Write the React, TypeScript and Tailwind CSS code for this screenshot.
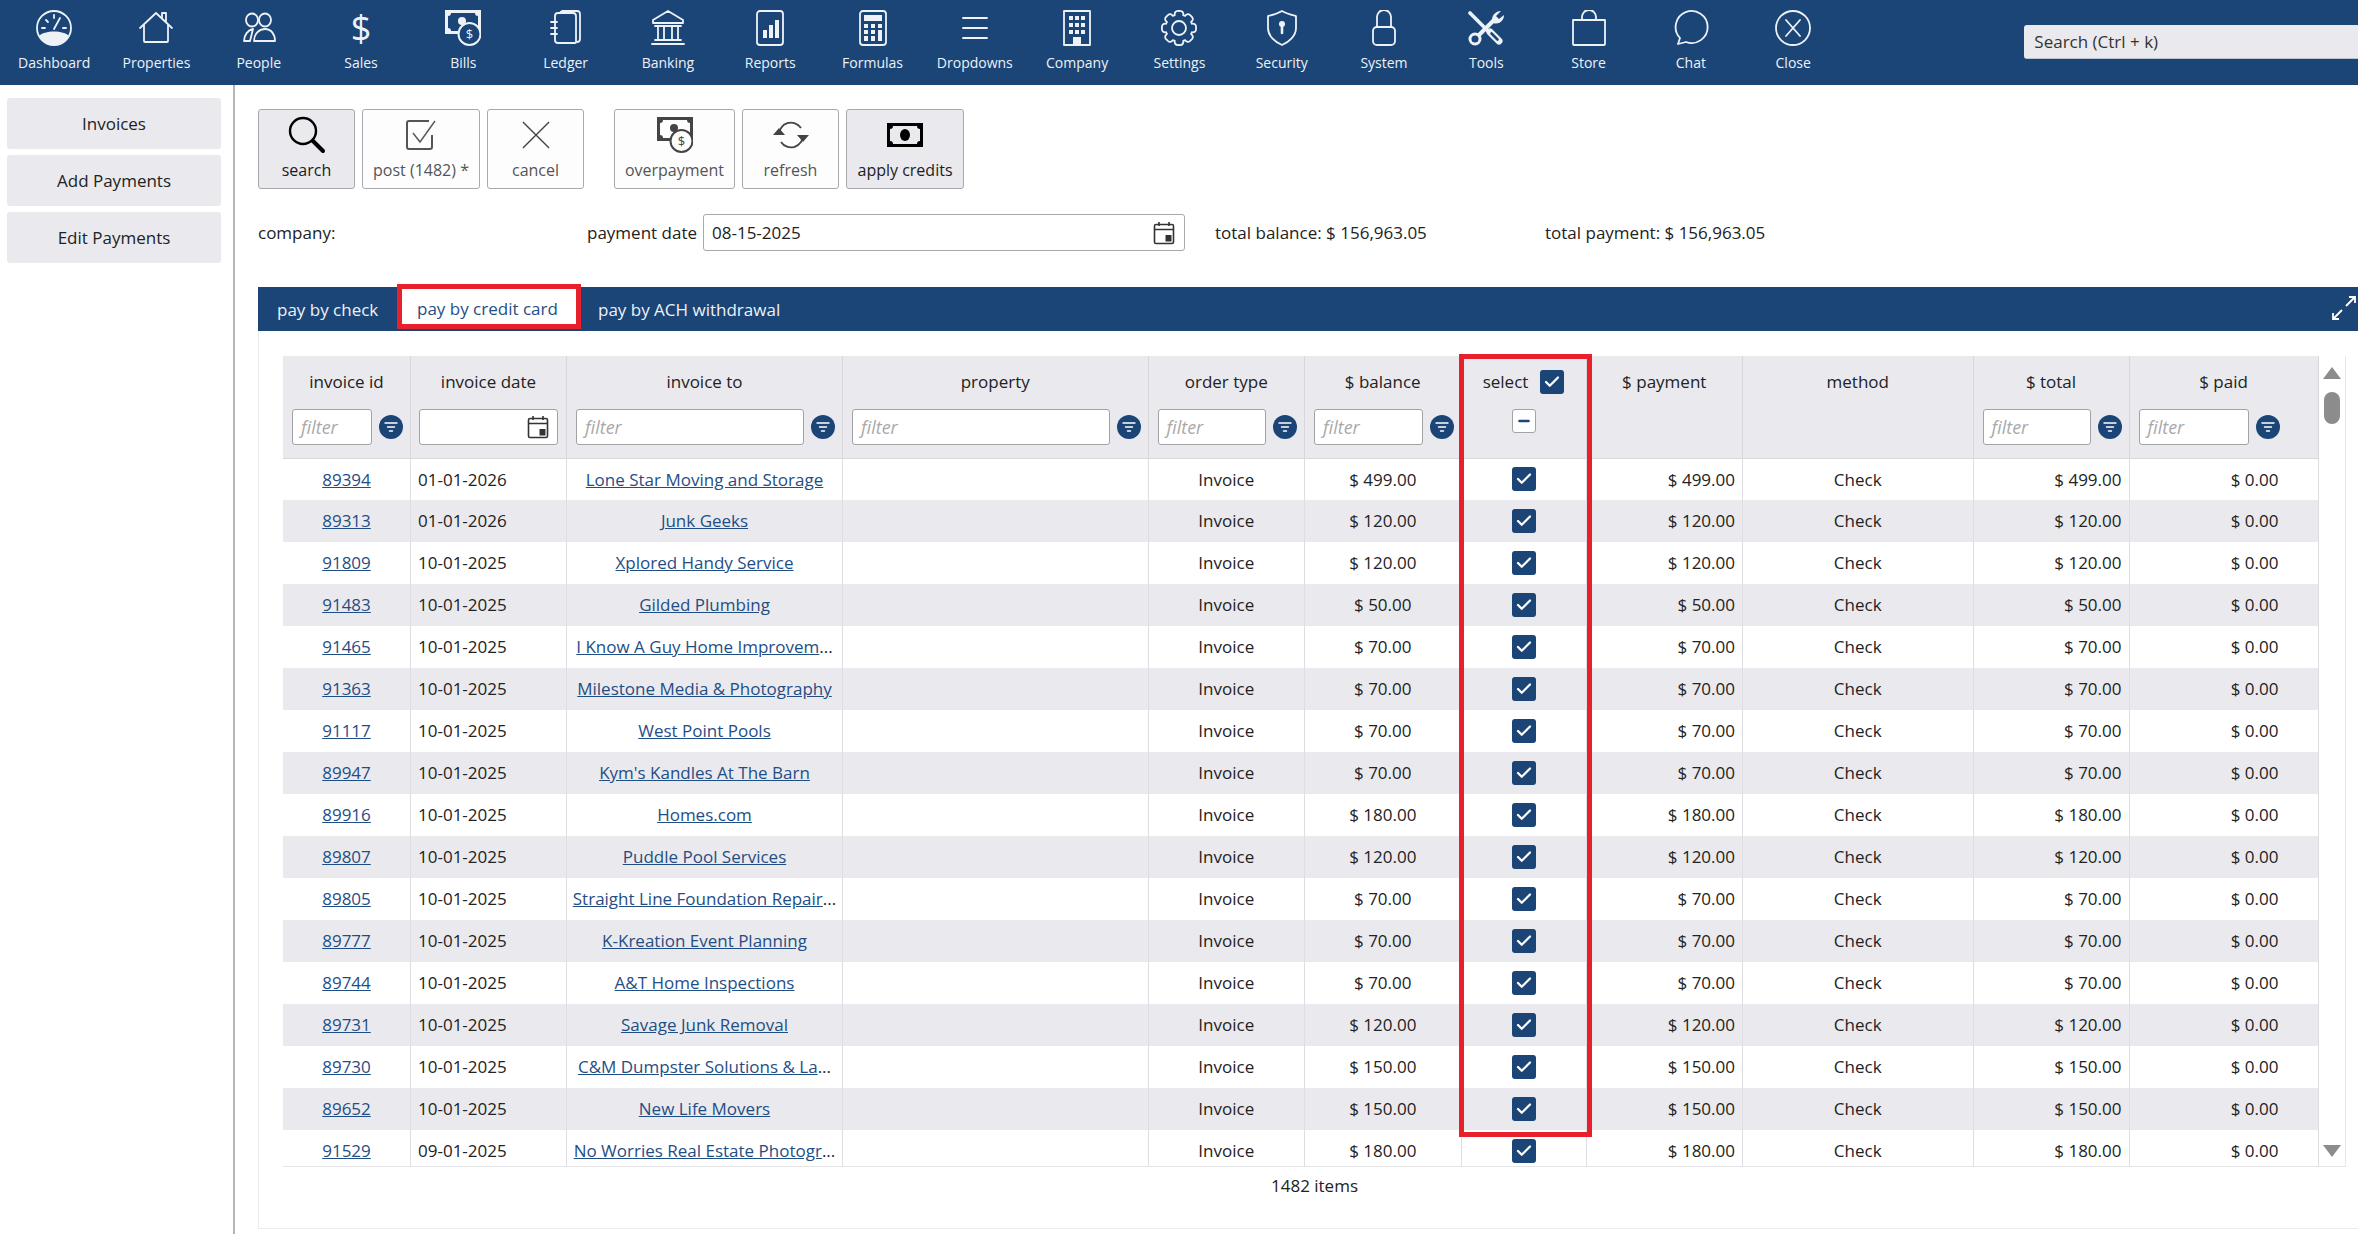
import type { ReactNode } from 'react';
import { Check, Minus } from 'lucide-react';

const gearPath = (() => {
  let d = '';
  for (let i = 0; i < 8; i++) {
    const a = (i * Math.PI) / 4 - Math.PI / 2;
    const pt = (r: number, off: number) =>
      `${(18 + r * Math.cos(a + off)).toFixed(2)} ${(18 + r * Math.sin(a + off)).toFixed(2)}`;
    d += `${i === 0 ? 'M' : 'L'}${pt(13.5, -0.32)} C${pt(15.5, -0.3)} ${pt(18, -0.22)} ${pt(17, 0)} C${pt(18, 0.22)} ${pt(15.5, 0.3)} ${pt(13.5, 0.32)} `;
  }
  return d + 'Z';
})();

function Icon({ children, className = 'w-9 h-9' }: { children: ReactNode; className?: string }) {
  return (
    <svg viewBox="0 0 36 36" fill="none" stroke="currentColor" strokeWidth="1.8" strokeLinecap="round" strokeLinejoin="round" className={className}>
      {children}
    </svg>
  );
}

function BillGlyph({ coinFill }: { coinFill: string }) {
  return (
    <>
      <path fill="currentColor" stroke="none" fillRule="evenodd" d="M0 0h36v24H0zM6 3a3 3 0 0 1-3 3v12a3 3 0 0 1 3 3h24a3 3 0 0 1 3-3V6a3 3 0 0 1-3-3z" />
      <circle cx="17" cy="11" r="4" fill="currentColor" stroke="none" />
      <circle cx="24.5" cy="24" r="11" fill={coinFill} stroke="currentColor" strokeWidth="2" />
      <text x="24.5" y="29" textAnchor="middle" fontSize="13" fill="currentColor" stroke="none">$</text>
    </>
  );
}

const navItems: { label: string; icon: ReactNode }[] = [
  {
    label: 'Dashboard',
    icon: (
      <Icon>
        <circle cx="18" cy="18" r="17" />
        <path fill="currentColor" stroke="none" d="M3 26c5-6 25-6 30 0a17 17 0 0 1-30 0z" />
        <path d="M18 19 24 8M6 18h3M27 18h3M10 10l2 2M18 5v3" />
      </Icon>
    ),
  },
  {
    label: 'Properties',
    icon: (
      <Icon>
        <path d="M2 18 18 3l16 15M6 15v16a1 1 0 0 0 1 1h22a1 1 0 0 0 1-1V15M24 8V3h4v9" />
      </Icon>
    ),
  },
  {
    label: 'People',
    icon: (
      <Icon>
        <ellipse cx="11" cy="10" rx="6" ry="6.5" />
        <ellipse cx="24" cy="10" rx="6" ry="6.5" />
        <path d="M3 31c0-6 4-11 9-12l-3 12zM13 31c0-7 5-12 11-12s10 5 10 12z" />
      </Icon>
    ),
  },
  {
    label: 'Sales',
    icon: (
      <span className="block w-9 h-9 text-center text-[36px] leading-[36px]">$</span>
    ),
  },
  { label: 'Bills', icon: <Icon><BillGlyph coinFill="#1a4576" /></Icon> },
  {
    label: 'Ledger',
    icon: (
      <Icon>
        <path d="M7 6a3 3 0 0 1 3-3h15a3 3 0 0 1 3 3v26a1 1 0 0 1-1 1H10a3 3 0 0 1-3-3z" />
        <path d="M12 3a3 3 0 0 1 2-2h15a3 3 0 0 1 3 3v25a3 3 0 0 1-3 3" />
        <path d="M3 12h6M3 18h6M3 24h6" />
      </Icon>
    ),
  },
  {
    label: 'Banking',
    icon: (
      <Icon>
        <path d="M18 1 3 10v3h30v-3zM5 16h26M8 16v13M14 16v13M22 16v13M28 16v13M5 30h26M2 34h32" />
      </Icon>
    ),
  },
  {
    label: 'Reports',
    icon: (
      <Icon>
        <rect x="5" y="1" width="26" height="34" rx="3" />
        <path fill="currentColor" stroke="none" d="M11 20h4v8h-4zM17 15h4v13h-4zM23 10h4v18h-4z" />
      </Icon>
    ),
  },
  {
    label: 'Formulas',
    icon: (
      <Icon>
        <rect x="5" y="1" width="26" height="34" rx="3" />
        <path fill="currentColor" stroke="none" d="M9 5h18v6H9zM9 14h4v4H9zM16 14h4v4h-4zM23 14h4v4h-4zM9 20h4v4H9zM16 20h4v4h-4zM23 20h4v11h-4zM9 26h4v5H9zM16 26h4v5h-4z" />
      </Icon>
    ),
  },
  {
    label: 'Dropdowns',
    icon: (
      <Icon>
        <path d="M6 8h24M6 18h24M6 28h24" />
      </Icon>
    ),
  },
  {
    label: 'Company',
    icon: (
      <Icon>
        <rect x="5" y="1" width="26" height="34" />
        <path fill="currentColor" stroke="none" d="M10 6h4v4h-4zM16 6h4v4h-4zM22 6h4v4h-4zM10 13h4v4h-4zM16 13h4v4h-4zM22 13h4v4h-4zM10 20h4v4h-4zM16 20h4v4h-4zM22 20h4v4h-4zM14 27h8v8h-8z" />
      </Icon>
    ),
  },
  {
    label: 'Settings',
    icon: (
      <Icon>
        <path d={gearPath} />
        <circle cx="18" cy="18" r="7" />
      </Icon>
    ),
  },
  {
    label: 'Security',
    icon: (
      <Icon>
        <path d="M18 1c5 3 10 4 14 5v12c0 8-7 14-14 17C11 32 4 26 4 18V6c4-1 9-2 14-5z" />
        <circle cx="18" cy="14" r="3" fill="currentColor" stroke="none" />
        <path d="M18 15v8" strokeWidth="2.6" />
      </Icon>
    ),
  },
  {
    label: 'System',
    icon: (
      <Icon>
        <rect x="7" y="17" width="22" height="18" rx="4" />
        <path d="M11 17V7a7 7 0 0 1 14 0v10" />
      </Icon>
    ),
  },
  {
    label: 'Tools',
    icon: (
      <Icon>
        <path d="M2 3 21 22" strokeWidth="3.6" />
        <path d="M11 25 26 10" strokeWidth="4" strokeLinecap="butt" />
        <path d="M25 13C22 7 27 1 33 1l-5 5 3 3 5-4c0 6-5 10-11 8z" fill="currentColor" stroke="none" />
        <circle cx="7" cy="29" r="5" strokeWidth="3" />
        <path d="M22 22l9 9" strokeWidth="7" />
        <path d="M23.5 23.5l6 6" strokeWidth="2.6" stroke="#1a4576" />
      </Icon>
    ),
  },
  {
    label: 'Store',
    icon: (
      <Icon>
        <path d="M2 10h32v24a1 1 0 0 1-1 1H3a1 1 0 0 1-1-1zM11 10V7a7 7 0 0 1 14 0v3" />
      </Icon>
    ),
  },
  {
    label: 'Chat',
    icon: (
      <Icon>
        <path d="M5 34l2-6A16 16 0 1 1 13 32z" />
      </Icon>
    ),
  },
  {
    label: 'Close',
    icon: (
      <Icon>
        <circle cx="18" cy="18" r="17" />
        <path d="m11 10 14 16M25 10 11 26" />
      </Icon>
    ),
  },
];

const sideLinks = ['Invoices', 'Add Payments', 'Edit Payments'];

type Row = { id: string; date: string; to: string; cut?: boolean; amount: string };

const rows: Row[] = [
  { id: '89394', date: '01-01-2026', to: 'Lone Star Moving and Storage', amount: '499.00' },
  { id: '89313', date: '01-01-2026', to: 'Junk Geeks', amount: '120.00' },
  { id: '91809', date: '10-01-2025', to: 'Xplored Handy Service', amount: '120.00' },
  { id: '91483', date: '10-01-2025', to: 'Gilded Plumbing', amount: '50.00' },
  { id: '91465', date: '10-01-2025', to: 'I Know A Guy Home Improvem', cut: true, amount: '70.00' },
  { id: '91363', date: '10-01-2025', to: 'Milestone Media & Photography', amount: '70.00' },
  { id: '91117', date: '10-01-2025', to: 'West Point Pools', amount: '70.00' },
  { id: '89947', date: '10-01-2025', to: "Kym's Kandles At The Barn", amount: '70.00' },
  { id: '89916', date: '10-01-2025', to: 'Homes.com', amount: '180.00' },
  { id: '89807', date: '10-01-2025', to: 'Puddle Pool Services', amount: '120.00' },
  { id: '89805', date: '10-01-2025', to: 'Straight Line Foundation Repair', cut: true, amount: '70.00' },
  { id: '89777', date: '10-01-2025', to: 'K-Kreation Event Planning', amount: '70.00' },
  { id: '89744', date: '10-01-2025', to: 'A&T Home Inspections', amount: '70.00' },
  { id: '89731', date: '10-01-2025', to: 'Savage Junk Removal', amount: '120.00' },
  { id: '89730', date: '10-01-2025', to: 'C&M Dumpster Solutions & La', cut: true, amount: '150.00' },
  { id: '89652', date: '10-01-2025', to: 'New Life Movers', amount: '150.00' },
  { id: '91529', date: '09-01-2025', to: 'No Worries Real Estate Photogr', cut: true, amount: '180.00' },
];

function ToolButton({ label, active, width, children }: { label: string; active?: boolean; width: string; children: ReactNode }) {
  return (
    <button className={`${width} h-20 flex flex-col items-center rounded-[3px] border border-[#a9a9ad] ${active ? 'bg-[#e9e9ee] text-[#1c1c1c]' : 'bg-[#fdfdfd] text-[#555555]'}`}>
      <span className="h-[46px] flex items-center justify-center mt-0.5">{children}</span>
      <span className="text-[16px] leading-5 mt-0.5">{label}</span>
    </button>
  );
}

function CalendarIcon() {
  return (
    <svg viewBox="0 0 22 24" className="w-[22px] h-6 text-[#333333]" fill="none" stroke="currentColor" strokeWidth="1.6">
      <rect x="1.5" y="3.5" width="19" height="19" rx="1.5" />
      <path d="M1.5 8.5h19M6 1v4M16 1v4" />
      <rect x="12.5" y="14" width="6" height="6.5" fill="currentColor" stroke="none" />
    </svg>
  );
}

function FilterButton() {
  return (
    <button className="w-6 h-6 shrink-0 rounded-full bg-[#1a4576] flex items-center justify-center">
      <svg viewBox="0 0 14 10" className="w-[14px] h-[10px]" stroke="#ffffff" strokeWidth="1.4" strokeLinecap="round">
        <path d="M1 1h12M3.5 5h7M5.5 9h3" />
      </svg>
    </button>
  );
}

function FilterInput({ wide = true, date = false }: { wide?: boolean; date?: boolean }) {
  return (
    <div className={`${wide ? 'flex-1 min-w-0' : 'w-[110px]'} h-9 bg-white rounded-[3px] border border-[#a3a3a6] flex items-center justify-between pl-2 pr-2`}>
      {date ? <span /> : <span className="italic text-[18px] text-[#a9a9a9] font-normal">filter</span>}
      {date && <CalendarIcon />}
    </div>
  );
}

function HeadCell({ label, filter, date, narrow }: { label: string; filter?: boolean; date?: boolean; narrow?: boolean }) {
  return (
    <th className="p-0 align-top border-r border-[#d8d8dc] border-b font-normal">
      <div className="h-[52px] flex items-center justify-center">{label}</div>
      {filter && (
        <div className={`mt-px flex items-center gap-[7px] ${narrow ? 'pl-[9px]' : 'pl-[9px] pr-[7px]'}`}>
          <FilterInput wide={!narrow} />
          <FilterButton />
        </div>
      )}
      {date && (
        <div className="mt-px px-2 flex">
          <FilterInput date />
        </div>
      )}
    </th>
  );
}

function CheckBox() {
  return (
    <span className="w-6 h-6 rounded-[3px] bg-[#1a4576] inline-flex items-center justify-center">
      <Check className="w-[18px] h-[18px] text-white" strokeWidth={3} />
    </span>
  );
}

export default function App() {
  return (
    <div className="h-screen overflow-hidden flex flex-col bg-white text-[17px] text-[#222222] font-['Open_Sans',sans-serif]">
      {/* Top nav */}
      <header className="h-[85px] shrink-0 bg-[#1a4576] flex">
        <nav className="flex pl-[3px] text-[#eef2f7]">
          {navItems.map((item) => (
            <a key={item.label} className="w-[102.3px] flex flex-col items-center pt-2.5">
              {item.icon}
              <span className="text-[14px] leading-5 mt-[7px]">{item.label}</span>
            </a>
          ))}
        </nav>
        <div className="ml-[180px] mt-[25px] flex-1 h-[34px] bg-[#e9e9ee] rounded-l-[3px] border-b border-[#b8c4d4] flex items-center pl-2.5 text-[#333333]">
          Search (Ctrl + k)
        </div>
      </header>

      <div className="flex-1 flex min-h-0">
        {/* Sidebar */}
        <aside className="w-[235px] shrink-0 border-r-2 border-[#b5b5b8] pt-[13px] pl-[7px] pr-3 flex flex-col gap-1.5">
          {sideLinks.map((link) => (
            <button key={link} className="h-[51px] rounded-[3px] bg-[#eaeaee] text-[#222222]">
              {link}
            </button>
          ))}
        </aside>

        {/* Main */}
        <main className="flex-1 min-w-0 pl-[23px] pt-6">
          <div className="flex gap-[7px]">
            <ToolButton label="search" active width="w-[97px]">
              <svg viewBox="0 0 38 38" className="w-[38px] h-[38px] text-black" fill="none" stroke="currentColor" strokeWidth="2.4">
                <circle cx="15" cy="15" r="13" />
                <path d="m25 25 10 10" strokeWidth="4" strokeLinecap="round" />
              </svg>
            </ToolButton>
            <ToolButton label="post (1482) *" width="w-[118px]">
              <svg viewBox="0 0 32 30" className="w-8 h-[30px] text-[#555555]" fill="none" stroke="currentColor" strokeWidth="2">
                <path d="M27 15v12a2 2 0 0 1-2 2H4a2 2 0 0 1-2-2V3a2 2 0 0 1 2-2h20" />
                <path d="m8 13 7 9L30 1" strokeWidth="1.4" />
              </svg>
            </ToolButton>
            <ToolButton label="cancel" width="w-[97px]">
              <svg viewBox="0 0 30 30" className="w-7 h-7 text-[#444444]" stroke="currentColor" strokeWidth="1.5">
                <path d="M1 1l28 28M29 1 1 29" />
              </svg>
            </ToolButton>
            <div className="w-[16px]" />
            <ToolButton label="overpayment" width="w-[121px]">
              <Icon className="w-9 h-9 text-[#444444]">
                <BillGlyph coinFill="#fdfdfd" />
              </Icon>
            </ToolButton>
            <ToolButton label="refresh" width="w-[97px]">
              <svg viewBox="0 0 36 32" className="w-9 h-8 text-[#444444]" fill="none" stroke="currentColor" strokeWidth="1.8">
                <path d="M6 16a12 12 0 0 1 22-7M30 16a12 12 0 0 1-22 7" />
                <path fill="currentColor" stroke="none" d="M0 16h12l-6-7zM24 16h12l-6 7z" />
              </svg>
            </ToolButton>
            <ToolButton label="apply credits" active width="w-[118px]">
              <svg viewBox="0 0 36 24" className="w-9 h-6 text-black">
                <path fill="currentColor" fillRule="evenodd" d="M0 0h36v24H0zM6 3a3 3 0 0 1-3 3v12a3 3 0 0 1 3 3h24a3 3 0 0 1 3-3V6a3 3 0 0 1-3-3z" />
                <ellipse cx="18" cy="12" rx="5" ry="6" fill="currentColor" />
              </svg>
            </ToolButton>
          </div>

          <div className="mt-[25px] flex items-center h-[37px]">
            <span className="w-[329px]">company:</span>
            <span className="w-[116px]">payment date</span>
            <div className="w-[482px] h-[37px] border border-[#a9a9ad] rounded-[3px] flex items-center justify-between pl-2 pr-[9px]">
              <span>08-15-2025</span>
              <CalendarIcon />
            </div>
            <span className="ml-[30px] w-[330px]">total balance: $ 156,963.05</span>
            <span>total payment: $ 156,963.05</span>
          </div>

          <div className="mt-9 h-11 bg-[#1a4576] text-[#eef2f7] flex items-start pl-[19px] pr-[2px]">
            <span className="w-[120px] h-11 pt-px flex items-center">pay by check</span>
            <span className="w-[184px] h-[45px] -mt-[3px] border-[5px] border-[#e8202b] bg-white text-[#1f4e85] flex items-center pl-[15px] pt-[5px]">pay by credit card</span>
            <span className="ml-[17px] h-11 pt-px flex items-center">pay by ACH withdrawal</span>
            <svg viewBox="0 0 24 24" className="w-6 h-6 ml-auto mt-[9px]" fill="none" stroke="#ffffff" strokeWidth="1.8">
              <path d="M14 10 23 1M17 1h6v6M10 14l-9 9M1 17v6h6" />
            </svg>
          </div>

          <div className="border-b border-l border-[#ececef] pl-[24px] pt-[25px] pr-3 h-[898px]">
            <div className="relative">
              <div className="h-[811px] flex overflow-hidden border-b border-[#e4e4e7]">
                <table className="w-[2035px] shrink-0 table-fixed h-fit self-start">
                  <colgroup>
                    <col className="w-[127.5px]" />
                    <col className="w-[156px]" />
                    <col className="w-[276px]" />
                    <col className="w-[305.5px]" />
                    <col className="w-[156.5px]" />
                    <col className="w-[156.5px]" />
                    <col className="w-[125px]" />
                    <col className="w-[156.5px]" />
                    <col className="w-[230.5px]" />
                    <col className="w-[156px]" />
                    <col className="w-[189px]" />
                  </colgroup>
                  <thead>
                    <tr className="h-[102px] bg-[#e9e9ee] text-[#222222]">
                      <HeadCell label="invoice id" filter />
                      <HeadCell label="invoice date" date />
                      <HeadCell label="invoice to" filter />
                      <HeadCell label="property" filter />
                      <HeadCell label="order type" filter />
                      <HeadCell label="$ balance" filter />
                      <th className="p-0 align-top border-r border-b border-[#d8d8dc] font-normal">
                        <div className="h-[52px] flex items-center justify-center gap-3">
                          select
                          <CheckBox />
                        </div>
                        <div className="mt-px flex justify-center">
                          <span className="w-6 h-6 rounded-[3px] bg-white border border-[#a3a3a6] inline-flex items-center justify-center">
                            <Minus className="w-4 h-4 text-[#1a4576]" strokeWidth={3.5} />
                          </span>
                        </div>
                      </th>
                      <HeadCell label="$ payment" />
                      <HeadCell label="method" />
                      <HeadCell label="$ total" filter />
                      <HeadCell label="$ paid" filter narrow />
                    </tr>
                  </thead>
                  <tbody>
                    {rows.map((row, i) => (
                      <tr key={row.id} className={`h-[42px] ${i % 2 === 1 ? 'bg-[#eaeaee]' : 'bg-white'}`}>
                        <td className="p-0 text-center border-r border-[#dedee2]">
                          <a className="underline text-[#1f4e85]">{row.id}</a>
                        </td>
                        <td className="p-0 pl-[7px] border-r border-[#dedee2]">{row.date}</td>
                        <td className="p-0 text-center whitespace-nowrap overflow-hidden border-r border-[#dedee2]">
                          <a className="underline text-[#1f4e85]">{row.to}</a>
                          {row.cut && '...'}
                        </td>
                        <td className="p-0 border-r border-[#dedee2]" />
                        <td className="p-0 text-center border-r border-[#dedee2]">Invoice</td>
                        <td className="p-0 text-center border-r border-[#dedee2]">$ {row.amount}</td>
                        <td className="p-0 text-center border-r border-[#dedee2]">
                          <span className="flex justify-center">
                            <CheckBox />
                          </span>
                        </td>
                        <td className="p-0 pr-[7px] text-right border-r border-[#dedee2]">$ {row.amount}</td>
                        <td className="p-0 text-center border-r border-[#dedee2]">Check</td>
                        <td className="p-0 pr-[7px] text-right border-r border-[#dedee2]">$ {row.amount}</td>
                        <td className="p-0 pr-[39px] text-right border-r border-[#dedee2]">$ 0.00</td>
                      </tr>
                    ))}
                  </tbody>
                </table>

                {/* Scroll rail */}
                <div className="w-[28px] border-r border-[#e8e8ea] flex flex-col items-center pt-2.5 pb-[8px]">
                  <svg viewBox="0 0 20 14" className="w-5 h-3.5" fill="#8c8c8c">
                    <path d="M10 1 19 13H1z" />
                  </svg>
                  <div className="mt-3 w-4 h-8 rounded-full bg-[#8c8c8c]" />
                  <svg viewBox="0 0 20 14" className="w-5 h-3.5 mt-auto" fill="#8c8c8c">
                    <path d="M1 1h18L10 13z" />
                  </svg>
                </div>
              </div>

              {/* Red highlight round the select column */}
              <div className="absolute left-[1176px] -top-0.5 w-[133px] h-[783px] border-[5px] border-[#e8202b] pointer-events-none" />

              <p className="text-center mt-[7px] leading-6">1482 items</p>
            </div>
          </div>
        </main>
      </div>
    </div>
  );
}
